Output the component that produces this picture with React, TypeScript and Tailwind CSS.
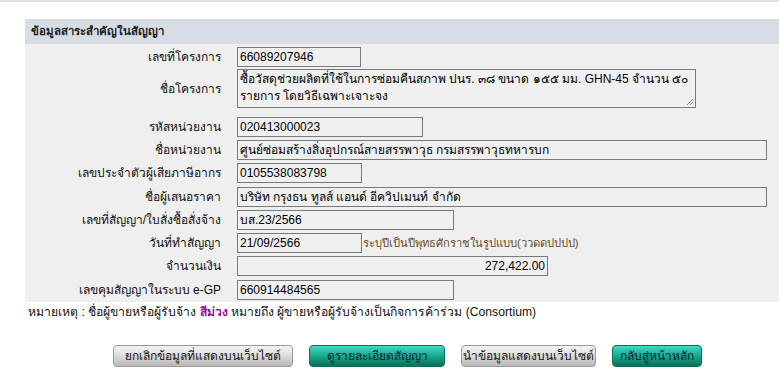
const rows: { label: string; value: string; width: string; hint?: string; right?: boolean }[] = [
  { label: "เลขที่โครงการ", value: "66089207946", width: "w-[124px]" },
];

const rest: { label: string; value: string; width: string; hint?: string; right?: boolean }[] = [
  { label: "รหัสหน่วยงาน", value: "020413000023", width: "w-[186px]" },
  { label: "ชื่อหน่วยงาน", value: "ศูนย์ซ่อมสร้างสิ่งอุปกรณ์สายสรรพาวุธ กรมสรรพาวุธทหารบก", width: "w-[530px]" },
  { label: "เลขประจำตัวผู้เสียภาษีอากร", value: "0105538083798", width: "w-[125px]" },
  { label: "ชื่อผู้เสนอราคา", value: "บริษัท กรุงธน ทูลส์ แอนด์ อีควิปเมนท์ จำกัด", width: "w-[530px]" },
  { label: "เลขที่สัญญา/ใบสั่งซื้อสั่งจ้าง", value: "บส.23/2566", width: "w-[217px]" },
  {
    label: "วันที่ทำสัญญา",
    value: "21/09/2566",
    width: "w-[125px]",
    hint: "ระบุปีเป็นปีพุทธศักราชในรูปแบบ(ววดดปปปป)",
  },
  { label: "จำนวนเงิน", value: "272,422.00", width: "w-[311px]", right: true },
  { label: "เลขคุมสัญญาในระบบ e-GP", value: "660914484565", width: "w-[217px]" },
];

function Field({ value, width, right }: { value: string; width: string; right?: boolean }) {
  return (
    <div
      className={`h-[20px] ${width} border border-[#7a7a7a] bg-[#f0f0f0] px-[2px] text-[12px] leading-[18px] text-black whitespace-nowrap overflow-hidden ${
        right ? "text-right" : ""
      }`}
    >
      {value}
    </div>
  );
}

function Btn({ label, width, teal }: { label: string; width: string; teal?: boolean }) {
  return (
    <button
      className={`h-[22px] ${width} whitespace-nowrap rounded-[4px] text-[12px] leading-[20px] ${
        teal
          ? "border border-[#0c6e5c] bg-gradient-to-b from-[#3fd9c2] via-[#17a98f] to-[#0a6f58] text-[#0b2438]"
          : "border border-[#9a9a9a] bg-gradient-to-b from-[#f4f4f4] via-[#dcdcdc] to-[#b8b8b8] text-[#141414]"
      }`}
    >
      {label}
    </button>
  );
}

export default function App() {
  const font = { fontFamily: "Tahoma, 'Liberation Sans', sans-serif" };
  return (
    <div className="w-[779px] h-[385px] overflow-hidden bg-white" style={font}>
      <div className="h-[2px] bg-[#e2e2e2]" />
      <div className="ml-[25px] mt-[17px]">
        <div className="h-[25px] bg-[#d6dde5] pl-[6px] text-[11.5px] font-bold leading-[25px] text-[#222]">
          ข้อมูลสาระสำคัญในสัญญา
        </div>
        <div className="bg-[#efefef] pt-[2px] pb-[1px]">
          {rows.map((r) => (
            <div key={r.label} className="flex items-center h-[22px]">
              <div className="w-[196px] text-right text-[12px] text-[#111]">{r.label}</div>
              <div className="ml-[16px]">
                <Field value={r.value} width={r.width} />
              </div>
            </div>
          ))}
          <div className="flex items-center mt-[1px] mb-[7px]">
            <div className="w-[196px] text-right text-[12px] text-[#111]">ชื่อโครงการ</div>
            <div className="ml-[16px] relative h-[39px] w-[459px] overflow-hidden whitespace-nowrap border border-[#7a7a7a] bg-[#f0f0f0] px-[2px] pt-[1px] text-[12px] leading-[17px] text-black">
              ซื้อวัสดุช่วยผลิตที่ใช้ในการซ่อมคืนสภาพ ปนร. ๓๘ ขนาด ๑๕๕ มม. GHN-45 จำนวน ๕๐
              <br />
              รายการ โดยวิธีเฉพาะเจาะจง
              <svg className="absolute right-[1px] bottom-[1px]" width="8" height="8" viewBox="0 0 8 8">
                <path d="M7 1L1 7M7 4L4 7" stroke="#888" strokeWidth="1" />
              </svg>
            </div>
          </div>
          {rest.map((r) => (
            <div key={r.label} className="flex items-center h-[23.3px]">
              <div className="w-[196px] text-right text-[12px] text-[#111]">{r.label}</div>
              <div className="ml-[16px] flex items-center">
                <Field value={r.value} width={r.width} right={r.right} />
                {r.hint && <span className="ml-[1px] text-[11.2px] text-[#6b4a26]">{r.hint}</span>}
              </div>
            </div>
          ))}
        </div>
      </div>
      <div className="ml-[28px] mt-[1px] text-[12.2px] text-[#111]">
        หมายเหตุ : ชื่อผู้ขายหรือผู้รับจ้าง <span className="font-bold text-[#a0109a]">สีม่วง</span> หมายถึง
        ผู้ขายหรือผู้รับจ้างเป็นกิจการค้าร่วม (Consortium)
      </div>
      <div className="ml-[113px] mt-[23px] flex gap-[16px]">
        <Btn label="ยกเลิกข้อมูลที่แสดงบนเว็บไซต์" width="w-[180px]" />
        <Btn label="ดูรายละเอียดสัญญา" width="w-[136px]" teal />
        <Btn label="นำข้อมูลแสดงบนเว็บไซต์" width="w-[135px]" />
        <Btn label="กลับสู่หน้าหลัก" width="w-[90px]" teal />
      </div>
    </div>
  );
}
